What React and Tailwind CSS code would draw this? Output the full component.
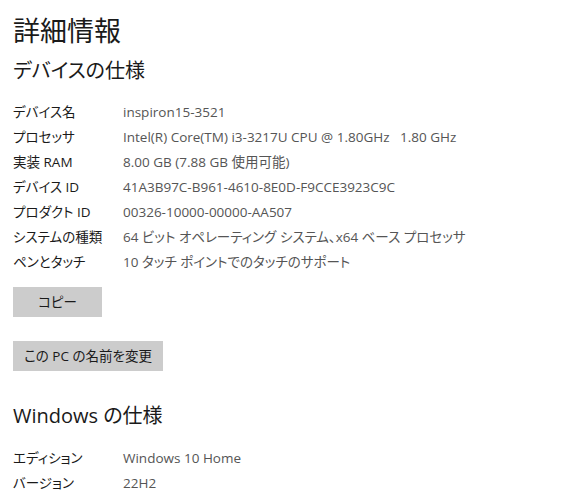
export default function App() {
  const font = { fontFamily: '"Open Sans", "Noto Sans CJK JP", sans-serif' };
  const rows = [
    ["デバイス名", "inspiron15-3521"],
    ["プロセッサ", "Intel(R) Core(TM) i3-3217U CPU @ 1.80GHz   1.80 GHz"],
    ["実装 RAM", "8.00 GB (7.88 GB 使用可能)"],
    ["デバイス ID", "41A3B97C-B961-4610-8E0D-F9CCE3923C9C"],
    ["プロダクト ID", "00326-10000-00000-AA507"],
    ["システムの種類", "64 ビット オペレーティング システム、x64 ベース プロセッサ"],
    ["ペンとタッチ", "10 タッチ ポイントでのタッチのサポート"],
  ];
  const rows2 = [
    ["エディション", "Windows 10 Home"],
    ["バージョン", "22H2"],
  ];
  return (
    <div className="w-[572px] h-[499px] bg-white overflow-hidden pl-[13px] [font-feature-settings:'palt']" style={font}>
      <h1 className="text-[27px] leading-[34px] text-[#1a1a1a] pt-[14px] font-normal">詳細情報</h1>
      <h2 className="text-[20px] leading-[28px] text-[#1a1a1a] mt-[9px] font-normal">デバイスの仕様</h2>
      <div className="mt-[15px] flex flex-col">
        {rows.map(([k, v]) => (
          <div key={k} className="flex h-[25px] items-center text-[13.5px]">
            <div className="w-[110px] text-[#1a1a1a]">{k}</div>
            <div className="text-[#555555] whitespace-pre">{v}</div>
          </div>
        ))}
      </div>
      <button className="mt-[12px] w-[89px] h-[30px] bg-[#cccccc] text-[13.5px] text-[#1a1a1a] block">コピー</button>
      <button className="mt-[24px] w-[150px] h-[30px] bg-[#cccccc] text-[13.5px] text-[#1a1a1a] block">この PC の名前を変更</button>
      <h2 className="text-[20px] leading-[28px] text-[#1a1a1a] mt-[31px] font-normal">Windows の仕様</h2>
      <div className="mt-[16px] flex flex-col">
        {rows2.map(([k, v]) => (
          <div key={k} className="flex h-[25px] items-center text-[13.5px]">
            <div className="w-[110px] text-[#1a1a1a]">{k}</div>
            <div className="text-[#555555]">{v}</div>
          </div>
        ))}
      </div>
    </div>
  );
}
